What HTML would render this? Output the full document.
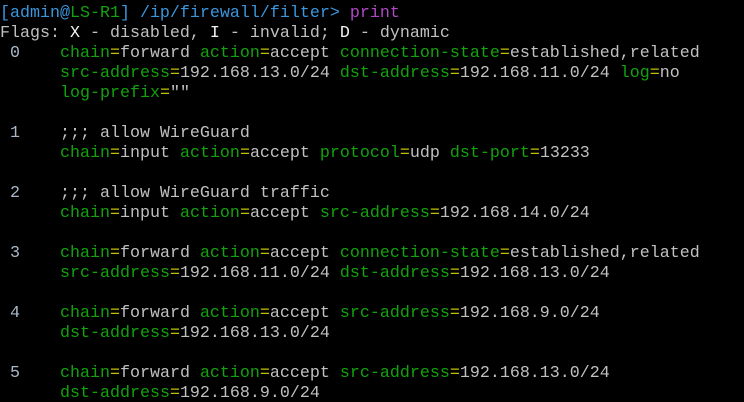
<!DOCTYPE html>
<html><head><meta charset="utf-8"><style>
html,body{margin:0;padding:0;background:#000;width:744px;height:402px;overflow:hidden}
pre{margin:0;padding:4px 0 0 0;font-family:"Liberation Mono","Courier New",Courier,monospace;font-size:16.67px;line-height:20px;color:#c0c0c0;white-space:pre}
.g{color:#13a10e}.y{color:#c1c100}.c{color:#3a96dd}.m{color:#b148c6}.w{color:#f2f2f2}.n{color:#a8b8c8}
</style></head><body><pre><span class="c">[admin@</span><span class="g">LS-R1</span><span class="c">] /ip/firewall/filter&gt; </span><span class="m">print</span>
Flags: <span class="w">X</span> - disabled, <span class="w">I</span> - invalid; <span class="w">D</span> - dynamic
<span class="n"> 0</span>    <span class="g">chain</span><span class="y">=</span>forward <span class="g">action</span><span class="y">=</span>accept <span class="g">connection-state</span><span class="y">=</span>established,related
      <span class="g">src-address</span><span class="y">=</span>192.168.13.0/24 <span class="g">dst-address</span><span class="y">=</span>192.168.11.0/24 <span class="g">log</span><span class="y">=</span>no
      <span class="g">log-prefix</span><span class="y">=</span>""

<span class="n"> 1</span>    ;;; allow WireGuard
      <span class="g">chain</span><span class="y">=</span>input <span class="g">action</span><span class="y">=</span>accept <span class="g">protocol</span><span class="y">=</span>udp <span class="g">dst-port</span><span class="y">=</span>13233

<span class="n"> 2</span>    ;;; allow WireGuard traffic
      <span class="g">chain</span><span class="y">=</span>input <span class="g">action</span><span class="y">=</span>accept <span class="g">src-address</span><span class="y">=</span>192.168.14.0/24

<span class="n"> 3</span>    <span class="g">chain</span><span class="y">=</span>forward <span class="g">action</span><span class="y">=</span>accept <span class="g">connection-state</span><span class="y">=</span>established,related
      <span class="g">src-address</span><span class="y">=</span>192.168.11.0/24 <span class="g">dst-address</span><span class="y">=</span>192.168.13.0/24

<span class="n"> 4</span>    <span class="g">chain</span><span class="y">=</span>forward <span class="g">action</span><span class="y">=</span>accept <span class="g">src-address</span><span class="y">=</span>192.168.9.0/24
      <span class="g">dst-address</span><span class="y">=</span>192.168.13.0/24

<span class="n"> 5</span>    <span class="g">chain</span><span class="y">=</span>forward <span class="g">action</span><span class="y">=</span>accept <span class="g">src-address</span><span class="y">=</span>192.168.13.0/24
      <span class="g">dst-address</span><span class="y">=</span>192.168.9.0/24
</pre></body></html>
